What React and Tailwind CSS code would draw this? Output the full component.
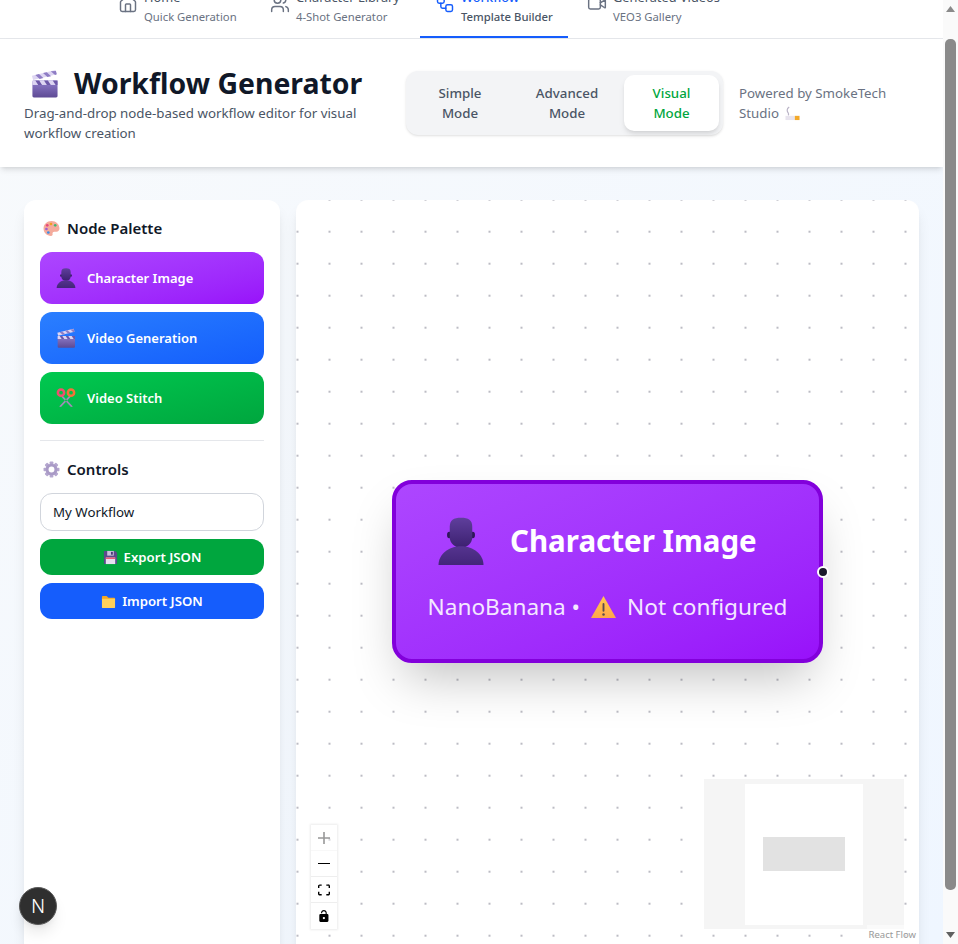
import React from "react";
import { House, Users, Workflow, Video } from "lucide-react";

function Person({ className }) {
  return (
    <svg viewBox="0 0 32 32" className={className}>
      <defs>
        <linearGradient id="pg" x1="0" y1="0" x2="0" y2="1">
          <stop offset="0" stopColor="#5f3f9c" />
          <stop offset="1" stopColor="#3c2070" />
        </linearGradient>
        <linearGradient id="ps" x1="0" y1="0" x2="0" y2="1">
          <stop offset="0" stopColor="#55348f" />
          <stop offset="1" stopColor="#43257a" />
        </linearGradient>
      </defs>
      <ellipse cx="8.200" cy="12" rx="1.500" ry="2.200" fill="#2f1758" />
      <ellipse cx="23.800" cy="12" rx="1.500" ry="2.200" fill="#2f1758" />
      <path d="M8.500 6.500C8.500 2 11 0.500 16 0.500s7.500 1.500 7.500 6v7c0 4-3.500 7-7.500 7s-7.500-3-7.500-7z" fill="url(#pg)" />
      <path d="M1 32c0-7 6.500-12.500 15-12.500S31 25 31 32z" fill="url(#ps)" />
    </svg>
  );
}

function Clapper({ className }) {
  return (
    <svg viewBox="2 1 27 30" className={className}>
      <defs>
        <linearGradient id="cg" x1="0" y1="0" x2="0" y2="1">
          <stop offset="0" stopColor="#8f7dcc" />
          <stop offset="1" stopColor="#5e4a94" />
        </linearGradient>
      </defs>
      <rect x="3" y="13" width="26" height="17.500" rx="1.500" fill="url(#cg)" />
      <rect x="3" y="13" width="26" height="4.500" fill="#ddd5f2" />
      <path d="M6 13l3 4.500h4L10 13zM15 13l3 4.500h4l-3-4.500zM24 13l3 4.500h2V13z" fill="#6d58a8" />
      <path d="M2.500 8l24.500-6 1.200 4.500L3.700 12.500z" fill="#ddd5f2" />
      <path d="M6 7.200l4.500 4.100 3.800-.9-4.500-4.100zM14 5.200l4.500 4.100 3.800-.9-4.500-4.100zM22 3.300l4.500 4 1.700-.8-.9-3.500z" fill="#8e7cc4" />
    </svg>
  );
}

function Palette({ className }) {
  return (
    <svg viewBox="0 0 32 32" className={className}>
      <path d="M16 2C7.500 2 1 8.500 1 16c0 8 6.500 14 14 14 2.500 0 3.500-1.500 3-3.500-.6-2.500.5-4.500 3.500-4.500h4c3 0 5.500-2.500 5.500-6C31 8 24.500 2 16 2z" fill="#f4ab9c" />
      <circle cx="15" cy="7.500" r="2.500" fill="#f0a020" />
      <circle cx="8" cy="10" r="2.500" fill="#e8487a" />
      <circle cx="6.500" cy="17" r="2.500" fill="#a05fd0" />
      <circle cx="10" cy="23.500" r="2.500" fill="#3a8ee8" />
      <circle cx="23" cy="10" r="2.500" fill="#40b870" />
    </svg>
  );
}

function Scissors({ className }) {
  return (
    <svg viewBox="0 2 32 29" className={className}>
      <path d="M10 12l17 18-3 1-16-17zM22 12L5 30l3 1 16-17z" fill="#a08cb8" />
      <circle cx="8" cy="8" r="5" fill="none" stroke="#f0506e" strokeWidth="4" />
      <circle cx="24" cy="8" r="5" fill="none" stroke="#f5703a" strokeWidth="4" />
    </svg>
  );
}

function Gear({ className }) {
  const teeth = [0, 45, 90, 135];
  return (
    <svg viewBox="0 0 32 32" className={className}>
      {teeth.map((a) => (
        <rect key={a} x="12.500" y="1" width="7" height="30" rx="1.500" fill="#b5a7cf" transform={`rotate(${a} 16 16)`} />
      ))}
      <circle cx="16" cy="16" r="11" fill="#a99ac6" />
      <circle cx="16" cy="16" r="5.500" fill="#fff" />
    </svg>
  );
}

function Floppy({ className }) {
  return (
    <svg viewBox="0 0 32 32" className={className}>
      <path d="M3 2h23l4 4v22a2 2 0 01-2 2H4a2 2 0 01-2-2V3a1 1 0 011-1z" fill="#5b4a8a" />
      <rect x="9" y="2" width="14" height="10" fill="#c9c2dc" />
      <rect x="17" y="4" width="4" height="6" fill="#4a3a78" />
      <rect x="6" y="16" width="20" height="14" fill="#e6e1f0" />
      <rect x="6" y="16" width="20" height="3" fill="#e8506e" />
    </svg>
  );
}

function Folder({ className }) {
  return (
    <svg viewBox="0 0 32 32" className={className}>
      <path d="M2 6a2 2 0 012-2h8l4 4h12a2 2 0 012 2v4H2z" fill="#f5a623" />
      <path d="M2 10h28v18a2 2 0 01-2 2H4a2 2 0 01-2-2z" fill="#ffd05a" />
    </svg>
  );
}

function Warning({ className }) {
  return (
    <svg viewBox="0 0 32 28" className={className}>
      <defs>
        <linearGradient id="wg" x1="0" y1="0" x2="0" y2="1">
          <stop offset="0" stopColor="#ffc94d" />
          <stop offset="1" stopColor="#ffa64a" />
        </linearGradient>
      </defs>
      <path d="M16 0L32 28H0z" fill="url(#wg)" />
      <rect x="14.800" y="9" width="2.400" height="11" rx="1.200" fill="#5c4a50" />
      <circle cx="16" cy="23.500" r="1.600" fill="#5c4a50" />
    </svg>
  );
}

function Cigarette({ className }) {
  return (
    <svg viewBox="0 0 32 32" className={className}>
      <path d="M9 2C3 6 4 11 7 15c1 1.500 1 3 0 5" fill="none" stroke="#b9b3c6" strokeWidth="2.500" />
      <rect x="1" y="21" width="20" height="9" fill="#e8e4ee" />
      <rect x="21" y="21" width="10" height="9" fill="#f3a92a" />
    </svg>
  );
}

function NavTab({ icon: Icon, title, sub, active, w }) {
  return (
    <div className={`${w} flex items-start gap-[6px] pl-[15px] pr-4 pt-[9px] border-b-2 ${active ? "border-[#155dfc]" : "border-transparent"}`}>
      <Icon className={`w-5 h-5 mt-[7px] shrink-0 ${active ? "text-[#155dfc]" : "text-[#6a7282]"}`} strokeWidth={1.75} />
      <div className="flex flex-col">
        <span className={`text-[12.8px] leading-5 whitespace-nowrap ${active ? "text-[#155dfc] font-medium" : "text-[#4a5565]"}`}>{title}</span>
        <span className={`text-[11.3px] leading-4 mt-[2px] whitespace-nowrap ${active ? "text-[#4a5565] font-medium" : "text-[#6a7282]"}`}>{sub}</span>
      </div>
    </div>
  );
}

function ModeBtn({ children, active, w }) {
  return (
    <div className={`${w} px-6 py-2 rounded-[10px] text-[13.3px] leading-5 font-medium text-center ${active ? "bg-white text-[#00a63e] shadow-md" : "text-[#4a5565]"}`}>
      {children}
    </div>
  );
}

function PaletteBtn({ icon: Icon, label, cls }) {
  return (
    <div className={`h-[52px] rounded-xl flex items-center gap-[11px] pl-4 text-white text-[13px] font-semibold ${cls}`}>
      <Icon className="w-5 h-5 shrink-0" />
      <span className="mt-px">{label}</span>
    </div>
  );
}

function CtrlBtn({ children, last, dim }) {
  return (
    <div className={`h-[26px] w-[26px] flex items-center justify-center bg-white ${last ? "" : "border-b border-[#eeeeee]"} ${dim ? "opacity-40" : ""}`}>
      {children}
    </div>
  );
}

export default function App() {
  return (
    <div className="h-[944px] w-[958px] overflow-hidden relative flex font-['Noto_Sans',sans-serif]">
      <div className="w-[943px] shrink-0 h-[944px] overflow-hidden flex flex-col bg-linear-to-br from-[#f8fafc] to-[#eff6ff]">
        {/* nav */}
        <div className="bg-white border-b border-[#e5e7eb] mt-[-22px] flex gap-1 pl-[103px] h-[61px] shrink-0">
          <NavTab w="w-[148px]" icon={House} title="Home" sub="Quick Generation" />
          <NavTab w="w-[161px]" icon={Users} title="Character Library" sub="4-Shot Generator" />
          <NavTab w="w-[148px]" icon={Workflow} title="Workflow" sub="Template Builder" active />
          <NavTab w="w-[166px]" icon={Video} title="Generated Videos" sub="VEO3 Gallery" />
        </div>
        {/* header */}
        <div className="bg-white shadow-md h-[128px] shrink-0 px-6 flex items-center">
          <div className="w-[358px] shrink-0">
            <div className="flex items-center h-10 pl-[7px] gap-4">
              <Clapper className="w-[27px] h-[29px]" />
              <h1 className="text-[28.4px] leading-10 -mt-px font-bold text-[#101828] whitespace-nowrap">Workflow Generator</h1>
            </div>
            <p className="text-[13.3px] leading-5 text-[#4a5565]">Drag-and-drop node-based workflow editor for visual workflow creation</p>
          </div>
          <div className="ml-6 bg-[#f3f4f6] rounded-xl p-1 flex shrink-0 shadow-sm">
            <ModeBtn w="w-[100px]">Simple Mode</ModeBtn>
            <ModeBtn w="w-[114px]">Advanced Mode</ModeBtn>
            <ModeBtn w="w-[95px]" active>Visual Mode</ModeBtn>
          </div>
          <div className="ml-4 w-[165px] text-[13.3px] leading-5 text-[#6a7282]">
            Powered by SmokeTech Studio <Cigarette className="inline w-[15px] h-[15px] ml-[3px] align-[-3px]" />
          </div>
        </div>
        {/* main */}
        <div className="flex gap-4 px-6 pt-[33px] flex-1 min-h-0">
          <div className="w-64 shrink-0 bg-white rounded-xl shadow-lg p-4 h-[780px]">
            <div className="flex items-center gap-[7px] h-6 pl-[3px] text-[15px] font-semibold text-[#101828]">
              <Palette className="w-[17px] h-[17px]" />
              <span>Node Palette</span>
            </div>
            <div className="mt-3 flex flex-col gap-2">
              <PaletteBtn icon={Person} label="Character Image" cls="bg-linear-to-br from-[#ad46ff] to-[#9810fa]" />
              <PaletteBtn icon={Clapper} label="Video Generation" cls="bg-linear-to-br from-[#2b7fff] to-[#155dfc]" />
              <PaletteBtn icon={Scissors} label="Video Stitch" cls="bg-linear-to-br from-[#00c950] to-[#00a63e]" />
            </div>
            <div className="mt-4 border-t border-[#e5e7eb] pt-4">
              <div className="flex items-center gap-[7px] h-6 pl-[3px] text-[15px] font-semibold text-[#101828]">
                <Gear className="w-[17px] h-[17px]" />
                <span>Controls</span>
              </div>
              <div className="mt-3 h-[38px] rounded-xl border border-[#d1d5dc] bg-white flex items-center px-3 pt-px text-[13.3px] text-[#101828]">My Workflow</div>
              <div className="mt-2 h-9 rounded-xl bg-[#00a63e] flex items-center justify-center gap-[6px] text-white text-[13.2px] font-semibold">
                <Floppy className="w-[15px] h-[15px]" />
                <span className="mt-px">Export JSON</span>
              </div>
              <div className="mt-2 h-9 rounded-xl bg-[#155dfc] flex items-center justify-center gap-[6px] text-white text-[13.2px] font-semibold">
                <Folder className="w-[15px] h-[15px]" />
                <span className="mt-px">Import JSON</span>
              </div>
            </div>
          </div>
          {/* canvas */}
          <div className="w-[623px] shrink-0 h-[780px] rounded-xl shadow-lg bg-white relative overflow-hidden bg-[radial-gradient(circle,#bcbcc4_1px,transparent_1px)] bg-[size:32px_32px] bg-[position:-14.5px_-16.3px]">
            <div className="absolute left-[96px] top-[280px] w-[431px] h-[183px] rounded-[20px] border-[4px] border-[#8200db] bg-linear-to-br from-[#ad46ff] to-[#9810fa] shadow-2xl flex flex-col">
              <div className="flex items-center gap-[25px] pl-[41px] pt-[33px]">
                <Person className="w-[48px] h-[48px]" />
                <span className="text-[29.5px] leading-[44px] font-bold text-white">Character Image</span>
              </div>
              <div className="mt-[26px] flex items-center justify-center gap-[11px] text-[22.6px] leading-8 text-[#f3e8ff]">
                <span>NanoBanana •</span>
                <Warning className="w-[25px] h-[22px]" />
                <span>Not configured</span>
              </div>
            </div>
            <div className="absolute left-[521px] top-[366px] w-3 h-3 rounded-full bg-[#1a192b] border-2 border-white" />
            {/* controls */}
            <div className="absolute left-[15px] top-[625px] shadow-[0_0_2px_1px_rgba(0,0,0,0.08)] flex flex-col">
              <CtrlBtn dim>
                <svg viewBox="0 0 32 32" className="w-3 h-3"><path d="M32 18.133H18.133V32h-4.266V18.133H0v-4.266h13.867V0h4.266v13.867H32z" /></svg>
              </CtrlBtn>
              <CtrlBtn>
                <svg viewBox="0 0 32 5" className="w-3 h-[1.5px]" preserveAspectRatio="none"><path d="M0 0h32v4.200H0z" /></svg>
              </CtrlBtn>
              <CtrlBtn>
                <svg viewBox="0 0 32 30" className="w-3 h-3"><path d="M3.692 4.630c0-.530.400-.938.939-.938h5.215V0H4.708C2.130 0 0 2.054 0 4.630v5.216h3.692V4.631zM27.354 0h-5.200v3.692h5.170c.530 0 .984.400.984.939v5.215H32V4.631A4.624 4.624 0 0027.354 0zm.954 24.830c0 .532-.400.940-.939.940h-5.215v3.768h5.215c2.577 0 4.631-2.130 4.631-4.707v-5.139h-3.692v5.139zm-23.677.940c-.531 0-.939-.400-.939-.940v-5.138H0v5.139c0 2.577 2.130 4.707 4.708 4.707h5.138V25.770H4.631z" /></svg>
              </CtrlBtn>
              <CtrlBtn last>
                <svg viewBox="0 0 25 32" className="w-3 h-3"><path d="M21.333 10.667H19.810V7.619C19.810 3.429 16.380 0 12.190 0 8.001 0 4.571 3.429 4.571 7.619v.762h3.048v-.762c0-2.438 2.133-4.571 4.571-4.571s4.572 2.133 4.572 4.571v3.048H3.048A3.056 3.056 0 000 13.714v15.238A3.056 3.056 0 003.048 32h18.285a3.056 3.056 0 003.048-3.048V13.714a3.056 3.056 0 00-3.048-3.047zM12.190 24.533a3.056 3.056 0 01-3.047-3.047 3.056 3.056 0 013.047-3.048 3.056 3.056 0 013.048 3.048 3.056 3.056 0 01-3.048 3.047z" /></svg>
              </CtrlBtn>
            </div>
            {/* minimap */}
            <div className="absolute left-[408px] top-[579px] w-[200px] h-[150px] bg-[#f5f5f5] flex items-center justify-center">
              <div className="w-[118px] h-[141px] bg-white flex items-center justify-center">
                <div className="w-[82px] h-[34px] bg-[#e2e2e2]" />
              </div>
            </div>
            <div className="absolute right-[1px] top-[725px] px-[2px] py-[2px] bg-white/50 text-[9.5px] leading-[15px] text-[#999]">React Flow</div>
          </div>
        </div>
      </div>
      {/* browser scrollbar */}
      <div className="w-[15px] h-[944px] shrink-0 bg-[#fafafa] relative">
        <svg viewBox="0 0 15 944" className="absolute inset-0 w-[15px] h-[944px]">
          <path d="M7.500 6L12 12H3z" fill="#8a8a8a" />
          <rect x="2" y="39" width="11" height="851" rx="5" fill="#8a8a8a" />
          <path d="M3 932h9l-4.500 6z" fill="#606060" />
        </svg>
      </div>
      {/* dev badge */}
      <div className="absolute left-[19px] top-[887px] w-[38px] h-[38px] rounded-full bg-[#2f2f2f] border border-[#5a5a5a] shadow-lg flex items-center justify-center text-white text-[18px] font-['Inter',sans-serif] font-light">N</div>
    </div>
  );
}
